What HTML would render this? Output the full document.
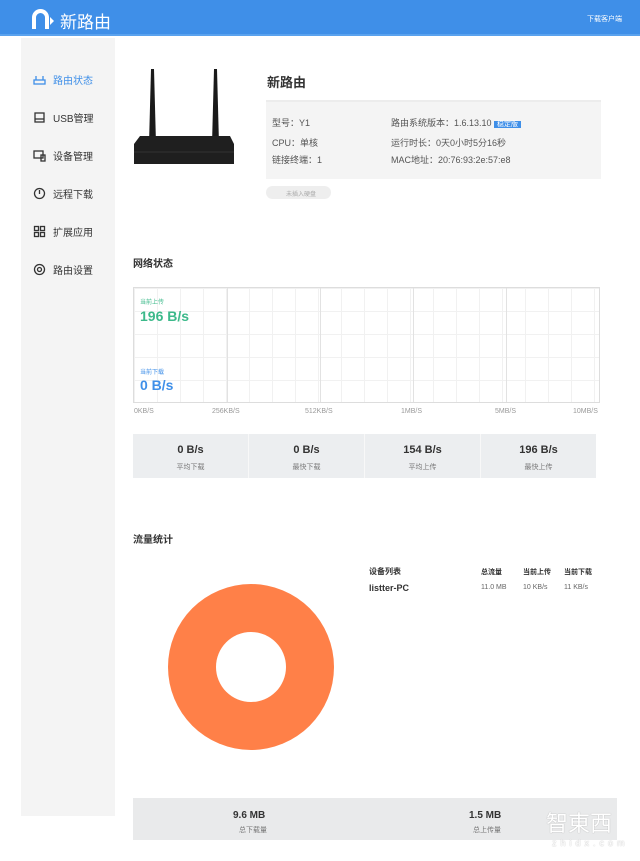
<!DOCTYPE html>
<html><head><meta charset="utf-8"><style>
*{margin:0;padding:0;box-sizing:border-box}
body{width:640px;height:861px;background:#fff;font-family:"Liberation Sans","Noto Sans CJK SC",sans-serif;position:relative;overflow:hidden;color:#333}
.a{position:absolute}
.hdr{left:0;top:0;width:640px;height:36px;background:#3f8fe8;border-bottom:2px solid #5aa2ee}
.side{left:21px;top:38px;width:94px;height:778px;background:#f4f4f4}
.nav{left:33px;font-size:10px;color:#333;display:flex;align-items:center;gap:7px}
.nav svg{width:13px;height:13px}
.info{left:266px;top:100px;width:335px;height:79px;background:#f4f4f4;border-top:2px solid #ececec}
.t9{font-size:9px;color:#555}
.chart{left:133px;top:287px;width:467px;height:116px;border:1px solid #ddd;
background-image:linear-gradient(#f1f1f1 1px,transparent 1px),linear-gradient(90deg,#f1f1f1 1px,transparent 1px);background-size:23px 23px}
.vl{top:288px;width:1px;height:114px;background:#e2e2e2}
.ax{top:408px;font-size:7px;color:#999}
.stats{left:133px;top:434px;width:463px;height:44px;background:#eceef0;display:flex}
.stats div{flex:1;text-align:center;border-right:1px solid #f8f8f8;padding-top:10px}
.stats b{display:block;font-size:11px;color:#333}
.stats span{font-size:7px;color:#777}
.bot{left:133px;top:798px;width:484px;height:42px;background:#e9eaeb}
</style></head><body>
<div class="a hdr"></div>
<div class="a" style="left:32px;top:9px;width:17px;height:20px;border:4px solid #fff;border-bottom:none;border-radius:9px 9px 0 0"></div>
<div class="a" style="left:50px;top:17px;width:0;height:0;border-left:4px solid #fff;border-top:4px solid transparent;border-bottom:4px solid transparent"></div>
<div class="a" style="left:60px;top:8px;font-size:17px;color:#fff">新路由</div>
<div class="a" style="left:587px;top:14px;font-size:7px;color:#fff">下载客户端</div>
<div class="a side"></div>
<div class="a nav" style="top:72px;color:#3f8fe8"><svg viewBox="0 0 13 13" fill="none" stroke="#3f8fe8" stroke-width="1.3"><rect x="1" y="7" width="11" height="4"/><path d="M3 7V3M10 7V3"/></svg>路由状态</div>
<div class="a nav" style="top:110px"><svg viewBox="0 0 13 13" fill="none" stroke="#333" stroke-width="1.3"><rect x="2" y="2" width="9" height="9"/><path d="M2 8h9"/></svg>USB管理</div>
<div class="a nav" style="top:148px"><svg viewBox="0 0 13 13" fill="none" stroke="#333" stroke-width="1.3"><rect x="1" y="2" width="9" height="7"/><rect x="8" y="6" width="4" height="6"/></svg>设备管理</div>
<div class="a nav" style="top:186px"><svg viewBox="0 0 13 13" fill="none" stroke="#333" stroke-width="1.3"><circle cx="6.5" cy="6.5" r="5"/><path d="M6.5 3v4"/></svg>远程下载</div>
<div class="a nav" style="top:224px"><svg viewBox="0 0 13 13" fill="none" stroke="#333" stroke-width="1.3"><rect x="1.5" y="1.5" width="4" height="4"/><rect x="7.5" y="1.5" width="4" height="4"/><rect x="1.5" y="7.5" width="4" height="4"/><rect x="7.5" y="7.5" width="4" height="4"/></svg>扩展应用</div>
<div class="a nav" style="top:262px"><svg viewBox="0 0 13 13" fill="none" stroke="#333" stroke-width="1.3"><circle cx="6.5" cy="6.5" r="5"/><circle cx="6.5" cy="6.5" r="2"/></svg>路由设置</div>
<!-- router -->
<svg class="a" style="left:130px;top:66px" width="110" height="110" viewBox="0 0 110 110">
<path d="M21 3h3l2 75h-7z" fill="#1a1a1a"/><path d="M84 3h3l2 75h-7z" fill="#1a1a1a"/>
<path d="M10 70h90l4 8v20H4V78z" fill="#1f1f1f"/><path d="M4 86h100" stroke="#333" stroke-width="1"/>
</svg>
<div class="a" style="left:267px;top:72px;font-size:13px;font-weight:bold;color:#333">新路由</div>
<div class="a info"></div>
<div class="a t9" style="left:272px;top:116px">型号：Y1</div>
<div class="a t9" style="left:272px;top:136px">CPU：单核</div>
<div class="a t9" style="left:272px;top:153px">链接终端：1</div>
<div class="a t9" style="left:391px;top:116px">路由系统版本：1.6.13.10 <span style="background:#3f8fe8;color:#fff;font-size:7px;padding:0 3px">稳定版</span></div>
<div class="a t9" style="left:391px;top:136px">运行时长：0天0小时5分16秒</div>
<div class="a t9" style="left:391px;top:153px">MAC地址：20:76:93:2e:57:e8</div>
<div class="a" style="left:266px;top:186px;width:65px;height:13px;background:#eee;border-radius:7px;font-size:6px;color:#aaa;padding:3px 0 0 20px">未插入硬盘</div>
<div class="a" style="left:133px;top:255px;font-size:10px;font-weight:bold">网络状态</div>
<div class="a chart"></div>
<div class="a vl" style="left:227px"></div><div class="a vl" style="left:320px"></div><div class="a vl" style="left:413px"></div><div class="a vl" style="left:506px"></div>
<div class="a" style="left:140px;top:297px;font-size:6px;color:#3cb98a">当前上传</div>
<div class="a" style="left:140px;top:308px;font-size:14px;font-weight:bold;color:#3cb98a">196 B/s</div>
<div class="a" style="left:140px;top:367px;font-size:6px;color:#3f8fe8">当前下载</div>
<div class="a" style="left:140px;top:377px;font-size:14px;font-weight:bold;color:#3f8fe8">0 B/s</div>
<div class="a ax" style="left:134px">0KB/S</div>
<div class="a ax" style="left:212px">256KB/S</div>
<div class="a ax" style="left:305px">512KB/S</div>
<div class="a ax" style="left:401px">1MB/S</div>
<div class="a ax" style="left:495px">5MB/S</div>
<div class="a ax" style="left:573px">10MB/S</div>
<div class="a stats"><div><b>0 B/s</b><span>平均下载</span></div><div><b>0 B/s</b><span>最快下载</span></div><div><b>154 B/s</b><span>平均上传</span></div><div style="border:none"><b>196 B/s</b><span>最快上传</span></div></div>
<div class="a" style="left:133px;top:531px;font-size:10px;font-weight:bold">流量统计</div>
<div class="a" style="left:369px;top:566px;font-size:8px;font-weight:bold">设备列表</div>
<div class="a" style="left:481px;top:567px;font-size:7px;font-weight:bold">总流量</div>
<div class="a" style="left:523px;top:567px;font-size:7px;font-weight:bold">当前上传</div>
<div class="a" style="left:564px;top:567px;font-size:7px;font-weight:bold">当前下载</div>
<div class="a" style="left:369px;top:583px;font-size:9px;font-weight:bold">listter-PC</div>
<div class="a" style="left:481px;top:584px;font-size:7px;color:#666">11.0 MB</div>
<div class="a" style="left:523px;top:584px;font-size:7px;color:#666">10 KB/s</div>
<div class="a" style="left:564px;top:584px;font-size:7px;color:#666">11 KB/s</div>
<div class="a" style="left:168px;top:584px;width:166px;height:166px;border-radius:50%;background:#ff8048"></div>
<div class="a" style="left:216px;top:632px;width:70px;height:70px;border-radius:50%;background:#fff"></div>
<div class="a bot"></div>
<div class="a" style="left:233px;top:810px;font-size:10px;font-weight:bold">9.6 MB</div>
<div class="a" style="left:239px;top:825px;font-size:7px;color:#777">总下载量</div>
<div class="a" style="left:469px;top:810px;font-size:10px;font-weight:bold">1.5 MB</div>
<div class="a" style="left:473px;top:825px;font-size:7px;color:#777">总上传量</div>
<div class="a" style="left:546px;top:806px;font-size:22px;color:#fff;text-shadow:0 0 1px #999">智東西</div>
<div class="a" style="left:552px;top:838px;font-size:9px;color:#fff;letter-spacing:4px;text-shadow:0 0 1px #999">zhidx.com</div>
</body></html>
